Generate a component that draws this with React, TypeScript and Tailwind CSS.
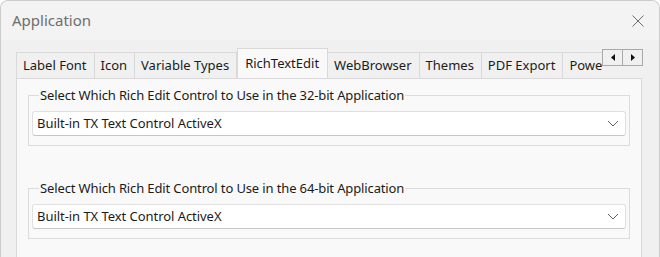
import React from "react";

const TABS = ["Label Font", "Icon", "Variable Types", "RichTextEdit", "WebBrowser", "Themes", "PDF Export", "PowerShell"];
const ACTIVE = "RichTextEdit";

function Chevron() {
  return (
    <svg width="12" height="7" viewBox="0 0 12 7" className="shrink-0">
      <path d="M1 1 L6 6 L11 1" fill="none" stroke="#5f5f5f" strokeWidth="1" />
    </svg>
  );
}

function Combo({ value }: { value: string }) {
  return (
    <div className="flex h-[25px] items-center justify-between rounded-[3px] border border-[#e0e0e0] border-b-[#c6c6c6] bg-white pl-[4px] pr-[6px]">
      <span className="text-[13px] leading-none tracking-[-0.05px] text-[#1b1b1b]">{value}</span>
      <Chevron />
    </div>
  );
}

function Group({ label, value, className }: { label: string; value: string; className?: string }) {
  return (
    <fieldset className={`mx-[11px] border border-[#dcdcdc] px-[3px] pb-[9px] ${className ?? ""}`}>
      <legend className="ml-[7px] px-[1px] text-[13px] leading-[18px] tracking-[-0.13px] text-[#1b1b1b]">{label}</legend>
      <div className="mt-[7px]">
        <Combo value={value} />
      </div>
    </fieldset>
  );
}

export default function App() {
  return (
    <div className="h-[257px] w-[660px] overflow-hidden bg-white font-['Noto_Sans','Liberation_Sans',sans-serif]">
      <div className="flex h-[260px] flex-col overflow-hidden rounded-t-[8px] border border-b-0 border-[#cccccc] bg-[#f0f0f0]">
        {/* title bar */}
        <div className="flex h-[39px] shrink-0 items-center justify-between bg-[#f3f3f3] pl-[11px] pr-[15px]">
          <span className="text-[15px] text-[#6e6e6e]">Application</span>
          <svg width="12" height="12" viewBox="0 0 12 12">
            <path d="M0.5 0.5 L11.5 11.5 M11.5 0.5 L0.5 11.5" stroke="#6a6a6a" strokeWidth="1" />
          </svg>
        </div>

        {/* tab strip */}
        <div className="flex h-[38px] shrink-0 items-end pl-[15px] pr-[16px]">
          <div className="flex h-[31px] w-[587px] items-end overflow-hidden">
            {TABS.map((t) =>
              t === ACTIVE ? (
                <div
                  key={t}
                  className="relative z-10 -mb-px flex h-[31px] shrink-0 items-start border border-b-0 border-[#d9d9d9] bg-[#f9f9f9] pl-[7px] pr-[8px] pt-[6px] text-[13px] leading-[17px] text-[#1b1b1b]"
                >
                  {t}
                </div>
              ) : (
                <div
                  key={t}
                  className="-ml-px flex h-[26px] shrink-0 items-center border border-b-0 border-[#d9d9d9] bg-[#f0f0f0] pl-[6px] pr-[7px] pb-px text-[13px] leading-none text-[#1b1b1b] first:ml-0"
                >
                  {t}
                </div>
              )
            )}
          </div>
          <div className="mb-[12px] flex self-end">
            <div className="flex h-[17px] w-[21px] items-center justify-center border border-[#a9a9a9] bg-[#f0f0f0]">
              <svg width="4" height="7" viewBox="0 0 4 7">
                <path d="M4 0 L0 3.5 L4 7 Z" fill="#111" />
              </svg>
            </div>
            <div className="-ml-px flex h-[17px] w-[21px] items-center justify-center border border-[#a9a9a9] bg-[#f0f0f0]">
              <svg width="4" height="7" viewBox="0 0 4 7">
                <path d="M0 0 L4 3.5 L0 7 Z" fill="#111" />
              </svg>
            </div>
          </div>
        </div>

        {/* tab page */}
        <div className="ml-[15px] mr-[17px] flex-1 border border-b-0 border-[#d9d9d9] bg-[#f9f9f9] pt-[7px]">
          <Group label="Select Which Rich Edit Control to Use in the 32-bit Application" value="Built-in TX Text Control ActiveX" />
          <Group
            className="mt-[33px]"
            label="Select Which Rich Edit Control to Use in the 64-bit Application"
            value="Built-in TX Text Control ActiveX"
          />
        </div>
      </div>
    </div>
  );
}
